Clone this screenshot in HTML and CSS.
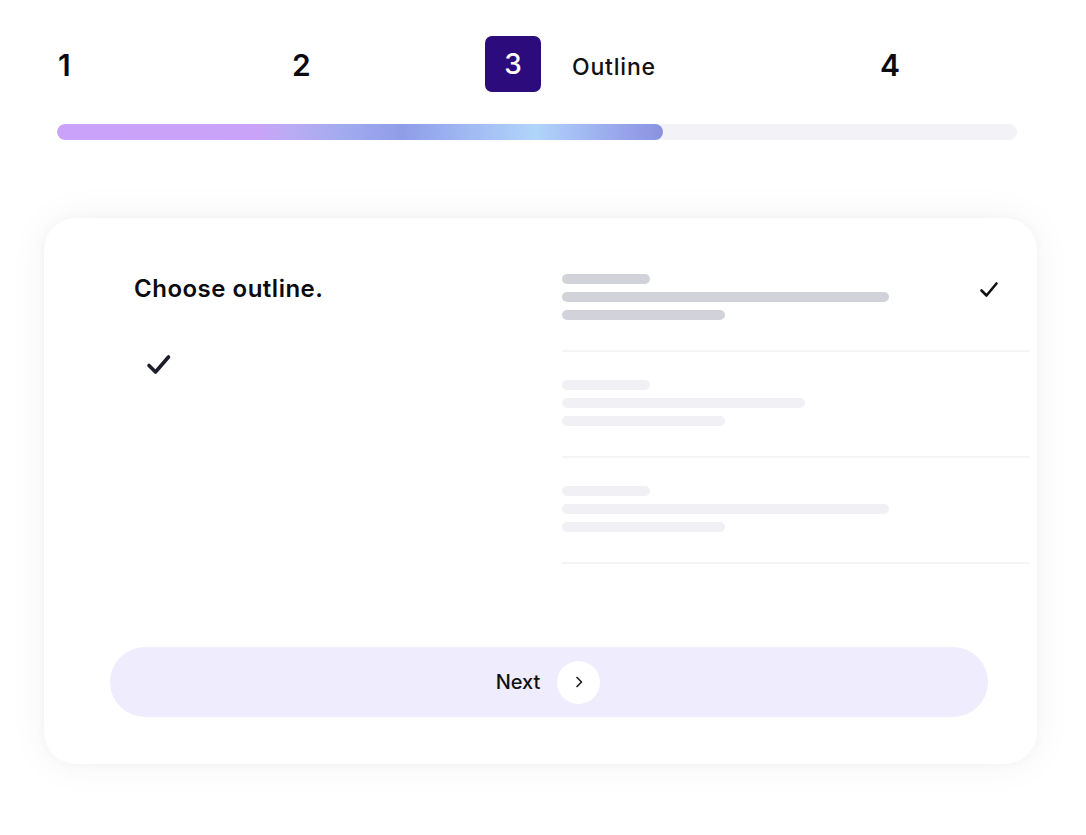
FILE: index.html
```html
<!DOCTYPE html>
<html>
<head>
<meta charset="utf-8">
<link rel="stylesheet" href="styles.css">
</head>
<body>
<div class="page">
  <div class="steps">
    <div class="step">1</div>
    <div class="step">2</div>
    <div class="step step-active">
      <span class="step-box">3</span>
      <span class="step-label">Outline</span>
    </div>
    <div class="step">4</div>
  </div>
  <div class="progress"><div class="progress-fill"></div></div>

  <div class="card">
    <div class="card-body">
      <div class="left">
        <h2 class="title">Choose outline.</h2>
        <svg class="left-check" width="26" height="22" viewBox="0 0 26 22"><path d="M3 11.5 L9.5 18 L22.5 3" fill="none" stroke="#1e1d2b" stroke-width="3.6" stroke-linecap="round" stroke-linejoin="round"/></svg>
      </div>
      <div class="list">
        <div class="item">
          <div class="lines">
            <div class="ln ln-s dark"></div>
            <div class="ln ln-l dark"></div>
            <div class="ln ln-m dark"></div>
          </div>
          <svg class="item-check" width="20" height="18" viewBox="0 0 20 18"><path d="M2.5 9.5 L7.5 14.5 L17.5 2.5" fill="none" stroke="#111" stroke-width="2.6" stroke-linecap="round" stroke-linejoin="round"/></svg>
        </div>
        <div class="item">
          <div class="lines">
            <div class="ln ln-s"></div>
            <div class="ln ln-ml"></div>
            <div class="ln ln-m"></div>
          </div>
        </div>
        <div class="item">
          <div class="lines">
            <div class="ln ln-s"></div>
            <div class="ln ln-l"></div>
            <div class="ln ln-m"></div>
          </div>
        </div>
      </div>
    </div>
    <button class="next">
      <span>Next</span>
      <span class="next-circle"><svg width="12" height="14" viewBox="0 0 12 14"><path d="M4 2.5 L8.5 7 L4 11.5" fill="none" stroke="#222" stroke-width="1.7" stroke-linecap="round" stroke-linejoin="round"/></svg></span>
    </button>
  </div>
</div>
</body>
</html>
```

FILE: styles.css
```css
* { box-sizing: border-box; }
html, body { margin: 0; padding: 0; background: #fff; }
body { font-family: Inter, "Noto Sans", sans-serif; color: #0d0d12; width: 1086px; height: 835px; overflow: hidden; }

.page { padding: 36px 0 0 0; }

.steps {
  display: grid;
  grid-template-columns: 234px 193px 395px auto;
  align-items: center;
  height: 56px;
  padding-left: 58px;
}
.step { font-size: 30px; font-weight: 600; line-height: 1; color: #0a0a0f; margin-top: 2px; }
.step-active { display: flex; align-items: center; gap: 31px; margin-top: 0; }
.step-box {
  width: 56px; height: 56px; border-radius: 7px;
  background: #2c0b7c; color: #fff;
  display: flex; align-items: center; justify-content: center;
  font-size: 28px; font-weight: 500;
}
.step-label { font-size: 23px; font-weight: 500; color: #111; margin-top: 6px; letter-spacing: 0.8px; }

.progress {
  margin: 32px 0 0 57px;
  width: 960px; height: 16px; border-radius: 8px;
  background: #f2f2f7; overflow: hidden;
}
.progress-fill {
  width: 606px; height: 100%; border-radius: 8px;
  background: linear-gradient(90deg, #caa1f8 0%, #c9a3f8 33%, #b9acf4 39%, #a0aaee 48%, #8f9de8 57%, #9fb7f2 67%, #b0d5fb 79%, #9fb2f0 89%, #8a91e0 100%);
}

.card {
  margin: 78px 0 0 44px;
  width: 993px; height: 546px;
  background: #fff; border-radius: 32px;
  box-shadow: 0 0 40px rgba(30, 30, 60, 0.05), 0 0 12px rgba(30, 30, 60, 0.03);
  padding: 56px 0 0 66px;
  display: flex; flex-direction: column;
}
.card-body { display: flex; }
.left { width: 452px; padding-left: 24px; }
.title { margin: 0; font-size: 24px; font-weight: 600; line-height: 30px; color: #0b0b10; letter-spacing: 0.5px; }
.left-check { display: block; margin: 50px 0 0 12px; }

.list { width: 467px; }
.item {
  padding: 28px 0 30px;
  border-bottom: 2px solid #f4f4f7;
  display: flex; justify-content: space-between; align-items: flex-start;
}
.item:first-child { padding-top: 0; }
.lines { display: flex; flex-direction: column; gap: 8px; }
.ln { height: 10px; border-radius: 5px; background: #f1f1f5; }
.ln.dark { background: #d2d3da; }
.ln-s { width: 88px; }
.ln-l { width: 327px; }
.ln-m { width: 163px; }
.ln-ml { width: 243px; }
.item-check { margin: 7px 30px 0 0; }

.next {
  margin: 83px 0 0 0;
  width: 878px; height: 70px; border: none; border-radius: 35px;
  background: #efecfd;
  display: flex; align-items: center; justify-content: center; gap: 17px;
  font-family: Inter, "Noto Sans", sans-serif; font-size: 20px; font-weight: 500; color: #111;
  padding: 0 2px 0 0;
}
.next-circle {
  width: 43px; height: 43px; border-radius: 50%; background: #fff;
  display: flex; align-items: center; justify-content: center;
}
```
